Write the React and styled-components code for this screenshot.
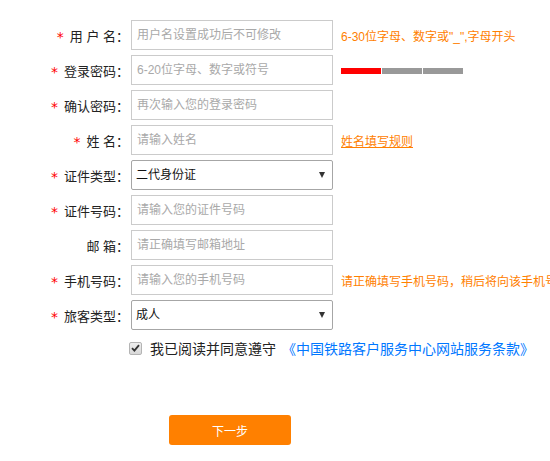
import React from "react";
import styled, { createGlobalStyle } from "styled-components";

const GlobalStyle = createGlobalStyle`
	html, body {
		margin: 0;
		padding: 0;
		background: #fff;
		overflow: hidden;
	}
	body {
		font-family: "Liberation Sans", "Noto Sans CJK SC", sans-serif;
		color: #333;
	}
`;

const Form = styled.div`
	padding-top: 20px;
	width: 550px;
`;

const Row = styled.div`
	display: grid;
	grid-template-columns: 131px 202px auto;
	align-items: center;
	height: 30px;
	margin-bottom: 5px;
`;

const Label = styled.label`
	display: flex;
	justify-content: flex-end;
	align-items: center;
	padding-right: 2px;
	font-size: 13px;
	color: #222;
	white-space: pre;
`;

const Star = styled.span`
	color: #f00;
	font-size: 14px;
	font-family: "DejaVu Sans", sans-serif;
	margin-right: 6px;
	vertical-align: -3px;
	position: relative;
	top: 2px;
`;

const Input = styled.input`
	box-sizing: border-box;
	width: 202px;
	height: 30px;
	margin: 0;
	padding: 0 5px;
	border: 1px solid #cbcbcb;
	outline: none;
	font-family: inherit;
	font-size: 12px;
	color: #333;
	&::placeholder {
		color: #a9a9a9;
	}
`;

const SelectWrap = styled.div`
	position: relative;
	width: 202px;
	height: 30px;
`;

const Select = styled.select`
	box-sizing: border-box;
	width: 202px;
	height: 30px;
	margin: 0;
	padding: 0 4px;
	border: 1px solid #a6a6a6;
	border-radius: 2px;
	background: #fff;
	appearance: none;
	outline: none;
	font-family: inherit;
	font-size: 12px;
	color: #111;
`;

const Arrow = styled.span`
	position: absolute;
	right: 8px;
	top: 12px;
	width: 0;
	height: 0;
	border-left: 3px solid transparent;
	border-right: 3px solid transparent;
	border-top: 6px solid #333;
	pointer-events: none;
`;

const Hint = styled.span`
	margin-left: 8px;
	font-size: 12px;
	color: #ff8000;
	white-space: nowrap;
`;

const HintLink = styled.a`
	margin-left: 8px;
	font-size: 12px;
	color: #ff8000;
	text-decoration: underline;
	white-space: nowrap;
`;

const Strength = styled.div`
	display: flex;
	gap: 1px;
	margin-left: 8px;
	margin-top: 1px;
`;

const Bar = styled.span`
	width: 40px;
	height: 6px;
	background: ${(p) => (p.$on ? "#ff0000" : "#999999")};
`;

const AgreeRow = styled.div`
	display: flex;
	align-items: center;
	height: 20px;
	margin-top: 8px;
	padding-left: 129px;
	font-size: 14px;
	color: #222;
	white-space: nowrap;
`;

const Check = styled.span`
	box-sizing: border-box;
	width: 13px;
	height: 13px;
	margin-right: 8px;
	border: 1px solid #b4b4b4;
	border-radius: 2px;
	background: linear-gradient(#eeeeee, #d8d8d8);
	display: flex;
	align-items: center;
	justify-content: center;
`;

const Terms = styled.a`
	margin-left: 6px;
	color: #0077ff;
	text-decoration: none;
`;

const Next = styled.button`
	display: block;
	width: 122px;
	height: 30px;
	margin: 57px 0 0 169px;
	border: none;
	border-radius: 3px;
	background: #ff8000;
	color: #fff;
	font-family: inherit;
	font-size: 12px;
	cursor: pointer;
`;

function Field({ required, label, children }) {
	return (
		<Row>
			<Label>
				{required && <Star>*</Star>}
				{label}
			</Label>
			{children}
		</Row>
	);
}

export default function App() {
	return (
		<>
			<GlobalStyle />
			<Form>
				<Field required label="用 户 名：">
					<Input placeholder="用户名设置成功后不可修改" />
					<Hint>6-30位字母、数字或"_",字母开头</Hint>
				</Field>
				<Field required label="登录密码：">
					<Input type="password" placeholder="6-20位字母、数字或符号" />
					<Strength>
						<Bar $on />
						<Bar />
						<Bar />
					</Strength>
				</Field>
				<Field required label="确认密码：">
					<Input type="password" placeholder="再次输入您的登录密码" />
				</Field>
				<Field required label="姓 名：">
					<Input placeholder="请输入姓名" />
					<HintLink href="#">姓名填写规则</HintLink>
				</Field>
				<Field required label="证件类型：">
					<SelectWrap>
						<Select defaultValue="1">
							<option value="1">二代身份证</option>
							<option value="2">港澳居民来往内地通行证</option>
							<option value="3">台湾居民来往大陆通行证</option>
							<option value="4">护照</option>
						</Select>
						<Arrow />
					</SelectWrap>
				</Field>
				<Field required label="证件号码：">
					<Input placeholder="请输入您的证件号码" />
				</Field>
				<Field label="邮 箱：">
					<Input placeholder="请正确填写邮箱地址" />
				</Field>
				<Field required label="手机号码：">
					<Input placeholder="请输入您的手机号码" />
					<Hint>请正确填写手机号码，稍后将向该手机号码发送短信验证码</Hint>
				</Field>
				<Field required label="旅客类型：">
					<SelectWrap>
						<Select defaultValue="1">
							<option value="1">成人</option>
							<option value="2">儿童</option>
							<option value="3">学生</option>
							<option value="4">残疾军人、伤残人民警察</option>
						</Select>
						<Arrow />
					</SelectWrap>
				</Field>
				<AgreeRow>
					<Check>
						<svg width="9" height="8" viewBox="0 0 9 8">
							<path d="M1 4.2 L3.4 6.6 L8 1.2" fill="none" stroke="#333" strokeWidth="1.8" />
						</svg>
					</Check>
					我已阅读并同意遵守
					<Terms href="#">《中国铁路客户服务中心网站服务条款》</Terms>
				</AgreeRow>
				<Next>下一步</Next>
			</Form>
		</>
	);
}
